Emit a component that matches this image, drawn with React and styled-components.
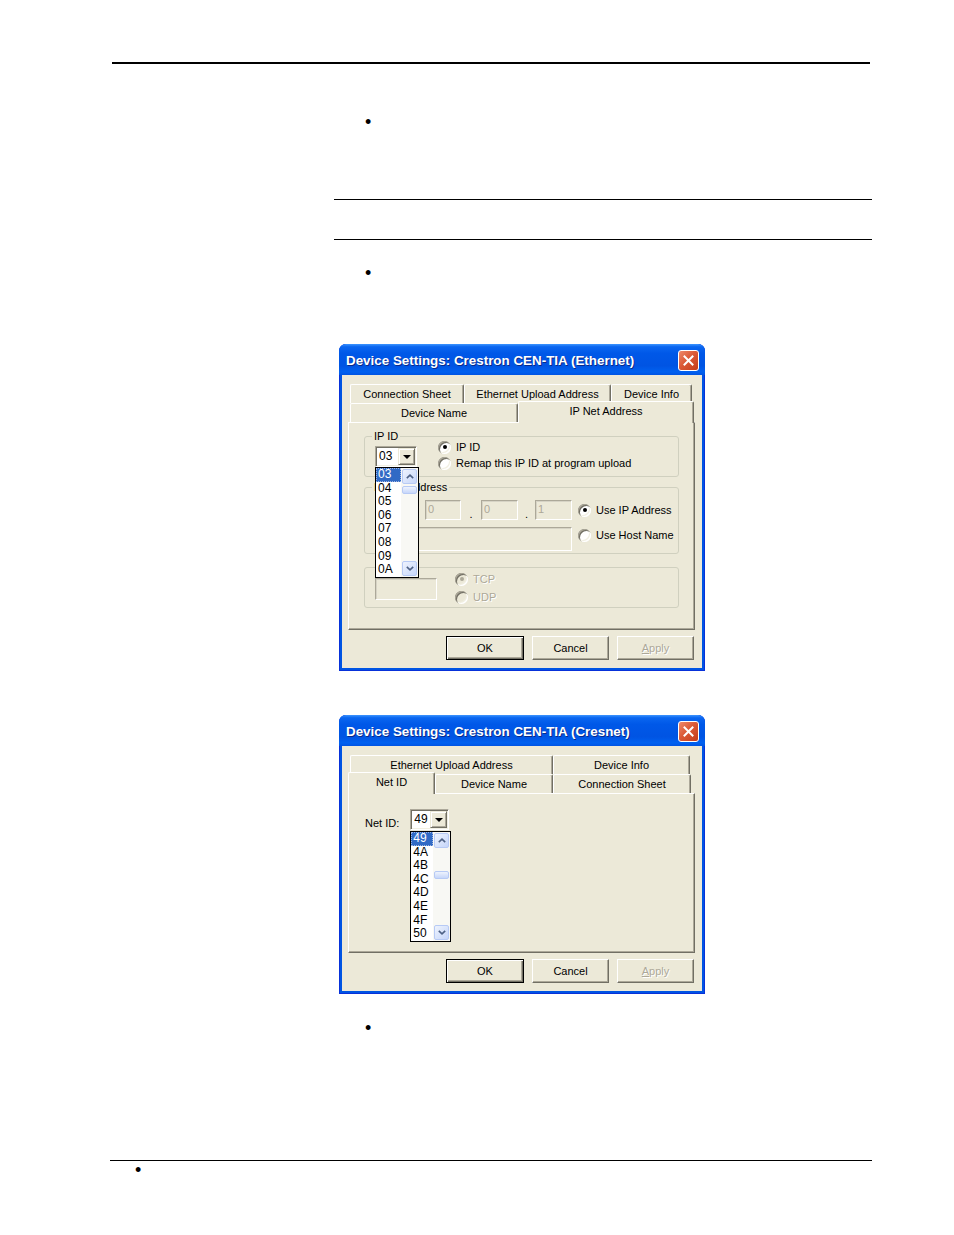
import React from 'react';
import styled, { createGlobalStyle, css } from 'styled-components';

const GlobalStyle = createGlobalStyle`
	html, body {
		margin: 0;
		padding: 0;
		background: #fff;
	}
	body {
		font-family: "Liberation Sans", Arial, sans-serif;
		color: #000;
	}
	* {
		box-sizing: border-box;
	}
`;

const Page = styled.div`
	width: 954px;
	min-height: 1235px;
	padding-top: 62px;
	display: flex;
	flex-direction: column;
`;

const HeaderRule = styled.div`
	margin-left: 112px;
	width: 758px;
	height: 2px;
	background: #000;
`;

const Column = styled.div`
	margin-left: 334px;
	width: 538px;
	display: flex;
	flex-direction: column;
`;

const Bullet = styled.div`
	margin-top: ${(p) => p.$top}px;
	padding-left: ${(p) => p.$indent}px;
	height: 16px;
	line-height: 16px;
	font-size: 18px;
`;

const Rule = styled.div`
	margin-top: ${(p) => p.$top}px;
	height: 1px;
	background: #000;
`;

const Footer = styled.div`
	margin-top: 124px;
	margin-left: 110px;
	width: 762px;
	display: flex;
	flex-direction: column;
`;

/* ---------- XP window ---------- */

const Window = styled.div`
	margin-top: ${(p) => p.$top}px;
	margin-left: 5px;
	width: 366px;
	display: flex;
	flex-direction: column;
	border-radius: 7px 7px 0 0;
	background: #0054e3;
	box-shadow: inset 0 0 0 1px #0831d9;
	overflow: hidden;
`;

const TitleBar = styled.div`
	height: 31px;
	display: flex;
	align-items: center;
	justify-content: space-between;
	padding: 1px 6px 0 7px;
	background: linear-gradient(
		180deg,
		#3d95ff 0%,
		#0a66f0 9%,
		#0058e8 30%,
		#0054e3 70%,
		#0061f0 90%,
		#0054e3 100%
	);
`;

const Title = styled.span`
	color: #fff;
	font-weight: bold;
	font-size: 13.4px;
	text-shadow: 1px 1px 0 #0a2a8a;
	white-space: nowrap;
`;

const CloseButton = styled.div`
	width: 21px;
	height: 21px;
	border: 1px solid #fff;
	border-radius: 3px;
	background: linear-gradient(135deg, #ee8a6c 0%, #db5a37 45%, #c43c1a 100%);
	display: flex;
	align-items: center;
	justify-content: center;
`;

const Body = styled.div`
	margin: 0 3px 3px;
	background: #ece9d8;
	padding: 9px 7px 8px 6px;
	display: flex;
	flex-direction: column;
`;

/* ---------- tabs ---------- */

const TabStrip = styled.div`
	display: flex;
	flex-direction: column;
	position: relative;
	z-index: 2;
`;

const TabRow = styled.div`
	display: flex;
	align-items: flex-end;
	height: 19px;
	padding-left: 2px;
`;

const Tab = styled.div`
	width: ${(p) => p.$w}px;
	height: 19px;
	flex-shrink: 0;
	display: flex;
	align-items: center;
	justify-content: center;
	font-size: 11px;
	white-space: nowrap;
	background: #ece9d8;
	border-top: 1px solid #fff;
	border-left: 1px solid #fff;
	border-right: 1px solid #716f64;
	border-radius: 2px 2px 0 0;
	box-shadow: inset -1px 0 0 #aca899;
	${(p) =>
		p.$selected &&
		css`
			height: 22px;
			margin-bottom: -1px;
			margin-left: ${p.$shift || 0}px;
			padding-bottom: 3px;
			position: relative;
			z-index: 3;
		`}
`;

const Panel = styled.div`
	height: ${(p) => p.$h}px;
	border: 1px solid;
	border-color: #fff #716f64 #716f64 #fff;
	box-shadow: inset -1px -1px 0 #aca899;
	display: flex;
	flex-direction: column;
	padding: ${(p) => p.$pad};
`;

/* ---------- group boxes ---------- */

const Group = styled.div`
	margin-top: ${(p) => p.$top}px;
	height: ${(p) => p.$h}px;
	border: 1px solid #d0d0bf;
	border-radius: 3px;
	display: flex;
	flex-direction: column;
	padding: 0 0 0 10px;
`;

const GroupLabel = styled.div`
	align-self: flex-start;
	margin: -7px 0 0 -3px;
	padding: 0 2px;
	background: #ece9d8;
	font-size: 11px;
	line-height: 13px;
`;

const GroupGap = styled.div`
	height: 13px;
	margin-top: -7px;
`;

const Row = styled.div`
	display: flex;
	align-items: ${(p) => p.$align || 'flex-start'};
	margin-top: ${(p) => p.$top || 0}px;
	gap: ${(p) => p.$gap || 0}px;
`;

const RadioColumn = styled.div`
	display: flex;
	flex-direction: column;
	gap: ${(p) => p.$gap || 0}px;
	margin-top: ${(p) => p.$top || 0}px;
	margin-left: ${(p) => p.$left || 0}px;
`;

/* ---------- controls ---------- */

const RadioRow = styled.div`
	display: flex;
	align-items: center;
	gap: 5px;
	height: 16px;
	flex-shrink: 0;
	font-size: 11px;
	white-space: nowrap;
	margin-left: ${(p) => p.$left || 0}px;
	color: ${(p) => (p.$disabled ? '#aca899' : '#000')};
	text-shadow: ${(p) => (p.$disabled ? '1px 1px 0 #fff' : 'none')};
`;

const RadioCircle = styled.span`
	width: 13px;
	height: 13px;
	flex-shrink: 0;
	border-radius: 50%;
	background: ${(p) => (p.$disabled ? '#ece9d8' : '#fff')};
	box-shadow: inset 1px 1px 0 #aca899, inset 2px 2px 0 #716f64, inset -1px -1px 0 #fff,
		inset -2px -2px 0 #f1efe2;
	display: flex;
	align-items: center;
	justify-content: center;
	&::after {
		content: '';
		width: 4px;
		height: 4px;
		border-radius: 50%;
		background: ${(p) => (p.$disabled ? '#aca899' : '#000')};
		display: ${(p) => (p.$checked ? 'block' : 'none')};
	}
`;

const Radio = ({ label, checked, disabled, left }) => (
	<RadioRow $disabled={disabled} $left={left}>
		<RadioCircle $checked={checked} $disabled={disabled} />
		{label}
	</RadioRow>
);

const Field = styled.div`
	width: ${(p) => p.$w}px;
	height: ${(p) => p.$h}px;
	flex-shrink: 0;
	background: #ece9d8;
	border: 1px solid;
	border-color: #aca899 #fff #fff #aca899;
	box-shadow: inset 1px 1px 0 #d6d3c5;
	font-size: 11px;
	line-height: ${(p) => p.$h - 3}px;
	padding-left: 2px;
	color: #aca899;
`;

const Dot = styled.span`
	width: ${(p) => p.$w}px;
	flex-shrink: 0;
	align-self: flex-end;
	text-align: center;
	font-size: 11px;
	line-height: 11px;
	color: #000;
`;

const ComboWrap = styled.div`
	position: relative;
	width: ${(p) => p.$w}px;
	height: ${(p) => p.$h}px;
	flex-shrink: 0;
	margin-top: ${(p) => p.$top || 0}px;
`;

const ComboBox = styled.div`
	width: 100%;
	height: 100%;
	display: flex;
	background: #fff;
	border: 1px solid;
	border-color: #aca899 #fff #fff #aca899;
	box-shadow: inset 1px 1px 0 #716f64, inset -1px -1px 0 #f1efe2;
	padding: 1px 1px 1px 2px;
`;

const ComboText = styled.span`
	flex: 1;
	font-size: 12px;
	line-height: 17px;
	padding-left: 1px;
`;

const ComboArrow = styled.span`
	width: 17px;
	height: 100%;
	background: #ece9d8;
	border: 1px solid;
	border-color: #ece9d8 #716f64 #716f64 #ece9d8;
	box-shadow: inset 1px 1px 0 #fff, inset -1px -1px 0 #aca899;
	display: flex;
	align-items: center;
	justify-content: center;
	&::after {
		content: '';
		border-left: 4px solid transparent;
		border-right: 4px solid transparent;
		border-top: 4px solid #000;
	}
`;

const DropList = styled.div`
	position: absolute;
	top: calc(100% + ${(p) => p.$gap}px);
	left: 0;
	width: ${(p) => p.$w}px;
	height: 111px;
	border: 1px solid #000;
	background: #fff;
	display: flex;
	z-index: 10;
`;

const Items = styled.div`
	flex: 1;
	display: flex;
	flex-direction: column;
`;

const Item = styled.div`
	height: 13.6px;
	line-height: 13.6px;
	font-size: 12px;
	padding-left: 2px;
	${(p) =>
		p.$sel &&
		css`
			background: #316ac5;
			color: #fff;
			outline: 1px dotted #9fb6e3;
			outline-offset: -1px;
		`}
`;

const ScrollBar = styled.div`
	width: 17px;
	display: flex;
	flex-direction: column;
	background: #f8f8f4;
`;

const ScrollButton = styled.div`
	width: 15px;
	height: 15px;
	margin: 1px;
	border-radius: 2px;
	border: 1px solid #b7caf5;
	background: linear-gradient(135deg, #eef3fd 0%, #c6d6fa 100%);
	display: flex;
	align-items: center;
	justify-content: center;
`;

const Track = styled.div`
	flex: 1;
	display: flex;
	flex-direction: column;
`;

const Thumb = styled.div`
	width: 15px;
	height: 8px;
	margin: ${(p) => p.$offset}px 1px 0;
	border-radius: 2px;
	border: 1px solid #b7caf5;
	background: linear-gradient(180deg, #eef3fd 0%, #c6d6fa 100%);
`;

const Chevron = ({ down }) => (
	<svg width="8" height="5" viewBox="0 0 8 5">
		<polyline
			points={down ? '0.8,0.8 4,3.8 7.2,0.8' : '0.8,4.2 4,1.2 7.2,4.2'}
			fill="none"
			stroke="#4d6185"
			strokeWidth="1.6"
		/>
	</svg>
);

const ButtonRow = styled.div`
	display: flex;
	justify-content: flex-end;
	gap: 8px;
	margin-top: 6px;
	padding-right: 1px;
`;

const Button = styled.div`
	width: ${(p) => p.$w || 77}px;
	height: 24px;
	display: flex;
	align-items: center;
	justify-content: center;
	font-size: 11px;
	background: #ece9d8;
	border: 1px solid;
	border-color: #fff #716f64 #716f64 #fff;
	box-shadow: inset -1px -1px 0 #aca899;
	${(p) =>
		p.$default &&
		css`
			border-color: #000;
			box-shadow: inset 1px 1px 0 #fff, inset -1px -1px 0 #716f64, inset -2px -2px 0 #aca899;
		`}
	${(p) =>
		p.$disabled &&
		css`
			color: #aca899;
			text-shadow: 1px 1px 0 #fff;
		`}
	u {
		text-decoration: underline;
	}
`;

const NetLabel = styled.span`
	font-size: 11px;
	line-height: 13px;
	margin-top: 8px;
`;

/* ---------- pieces ---------- */

const Dropdown = ({ value, items, w, h, listW, gap, thumb, top }) => (
	<ComboWrap $w={w} $h={h} $top={top}>
		<ComboBox>
			<ComboText>{value}</ComboText>
			<ComboArrow />
		</ComboBox>
		<DropList $w={listW} $gap={gap}>
			<Items>
				{items.map((it, i) => (
					<Item key={it} $sel={i === 0}>
						{it}
					</Item>
				))}
			</Items>
			<ScrollBar>
				<ScrollButton>
					<Chevron />
				</ScrollButton>
				<Track>
					<Thumb $offset={thumb} />
				</Track>
				<ScrollButton>
					<Chevron down />
				</ScrollButton>
			</ScrollBar>
		</DropList>
	</ComboWrap>
);

const CloseIcon = () => (
	<svg width="11" height="11" viewBox="0 0 11 11">
		<path d="M1.5 1.5 L9.5 9.5 M9.5 1.5 L1.5 9.5" stroke="#fff" strokeWidth="2" strokeLinecap="square" />
	</svg>
);

const DialogButtons = () => (
	<ButtonRow>
		<Button $default $w={78}>
			OK
		</Button>
		<Button>Cancel</Button>
		<Button $disabled>
			<u>A</u>pply
		</Button>
	</ButtonRow>
);

const Dialog = ({ title, top, children }) => (
	<Window $top={top}>
		<TitleBar>
			<Title>{title}</Title>
			<CloseButton>
				<CloseIcon />
			</CloseButton>
		</TitleBar>
		<Body>
			{children}
			<DialogButtons />
		</Body>
	</Window>
);

const ipItems = ['03', '04', '05', '06', '07', '08', '09', '0A'];
const netItems = ['49', '4A', '4B', '4C', '4D', '4E', '4F', '50'];

export default function App() {
	return (
		<>
			<GlobalStyle />
			<Page>
				<HeaderRule />
				<Column>
					<Bullet $top={50} $indent={31}>•</Bullet>
					<Rule $top={69} />
					<Rule $top={39} />
					<Bullet $top={25} $indent={31}>•</Bullet>

					<Dialog top={63} title="Device Settings: Crestron CEN-TIA (Ethernet)">
						<TabStrip>
							<TabRow>
								<Tab $w={114}>Connection Sheet</Tab>
								<Tab $w={147}>Ethernet Upload Address</Tab>
								<Tab $w={81}>Device Info</Tab>
							</TabRow>
							<TabRow>
								<Tab $w={168}>Device Name</Tab>
								<Tab $w={176} $selected>
									IP Net Address
								</Tab>
							</TabRow>
						</TabStrip>
						<Panel $h={208} $pad="0 15px">
							<Group $top={13} $h={41}>
								<GroupLabel>IP ID</GroupLabel>
								<Row>
									<Dropdown
										value="03"
										items={ipItems}
										w={42}
										h={21}
										listW={44}
										gap={0}
										thumb={1}
										top={3}
									/>
									<RadioColumn $top={-4} $left={21}>
										<Radio label="IP ID" checked />
										<Radio label="Remap this IP ID at program upload" />
									</RadioColumn>
								</Row>
							</Group>

							<Group $top={10} $h={67}>
								<GroupLabel>IP Net Address</GroupLabel>
								<Row $top={6} $align="center">
									<Field $w={36} $h={20} />
									<Dot $w={14}>.</Dot>
									<Field $w={36} $h={20}>0</Field>
									<Dot $w={20}>.</Dot>
									<Field $w={37} $h={20}>0</Field>
									<Dot $w={17}>.</Dot>
									<Field $w={37} $h={20}>1</Field>
									<Radio label="Use IP Address" checked left={6} />
								</Row>
								<Row $top={7}>
									<Field $w={197} $h={24} />
									<Radio label="Use Host Name" left={6} />
								</Row>
							</Group>

							<Group $top={13} $h={41}>
								<GroupGap />
								<Row $top={4}>
									<Field $w={62} $h={22} />
									<RadioColumn $top={-7} $left={18} $gap={2}>
										<Radio label="TCP" checked disabled />
										<Radio label="UDP" disabled />
									</RadioColumn>
								</Row>
							</Group>
						</Panel>
					</Dialog>

					<Dialog top={44} title="Device Settings: Crestron CEN-TIA (Cresnet)">
						<TabStrip>
							<TabRow>
								<Tab $w={203}>Ethernet Upload Address</Tab>
								<Tab $w={137}>Device Info</Tab>
							</TabRow>
							<TabRow>
								<Tab $w={87} $selected $shift={-2}>
									Net ID
								</Tab>
								<Tab $w={118}>Device Name</Tab>
								<Tab $w={138}>Connection Sheet</Tab>
							</TabRow>
						</TabStrip>
						<Panel $h={160} $pad="15px 16px 0">
							<Row $gap={11}>
								<NetLabel>Net ID:</NetLabel>
								<Dropdown
									value="49"
									items={netItems}
									w={39}
									h={21}
									listW={41}
									gap={1}
									thumb={22}
								/>
							</Row>
						</Panel>
					</Dialog>

					<Bullet $top={26} $indent={31}>•</Bullet>
				</Column>
				<Footer>
					<Rule $top={0} />
					<Bullet $top={1} $indent={25}>•</Bullet>
				</Footer>
			</Page>
		</>
	);
}
